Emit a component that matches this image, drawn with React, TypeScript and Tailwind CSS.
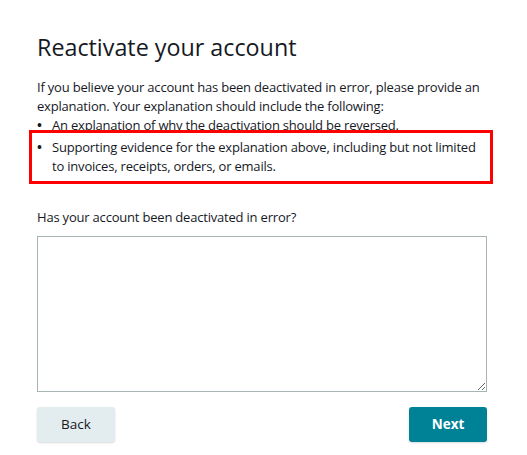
export default function App() {
  return (
    <div className="min-h-[455px] w-[527px] bg-white font-['Open_Sans',sans-serif] text-[#16191f]">
      <div className="w-[450px] pl-[37px] pt-[33px] box-content">
        <h1 className="text-[23.3px] leading-[28px] font-normal">Reactivate your account</h1>

        <div className="text-[13px] leading-[19px] tracking-[-0.2px]">
          <p className="mt-[17px]">
            If you believe your account has been deactivated in error, please provide an explanation. Your
            explanation should include the following:
          </p>
          <ul>
            <li className="flex">
              <span className="w-[15px] shrink-0 font-bold">•</span>
              <span>An explanation of why the deactivation should be reversed.</span>
            </li>
            <li className="relative mt-[3px] flex">
              <span className="w-[15px] shrink-0 font-bold">•</span>
              <span>
                Supporting evidence for the explanation above, including but not limited to invoices,
                receipts, orders, or emails.
              </span>
              <div className="pointer-events-none absolute -left-[8px] -right-[6px] -top-[8px] -bottom-[8px] border-[3px] border-[#ff0000]" />
            </li>
          </ul>

          <label className="mt-[32px] block">Has your account been deactivated in error?</label>
        </div>
        <textarea className="mt-[9px] block h-[156px] w-[450px] rounded-none border border-[#a6b4b6] bg-white p-2 text-[13px] outline-none" />

        <div className="mt-[15px] flex justify-between">
          <button className="h-[35px] w-[78px] rounded-[3px] bg-[#e3ecee] text-[13.5px] text-[#16191f] shadow-[0_1px_2px_rgba(0,0,0,0.15)]">
            Back
          </button>
          <button className="h-[35px] w-[78px] rounded-[3px] bg-[#008296] text-[13.5px] font-bold text-white shadow-[0_1px_2px_rgba(0,0,0,0.15)]">
            Next
          </button>
        </div>
      </div>
    </div>
  );
}
